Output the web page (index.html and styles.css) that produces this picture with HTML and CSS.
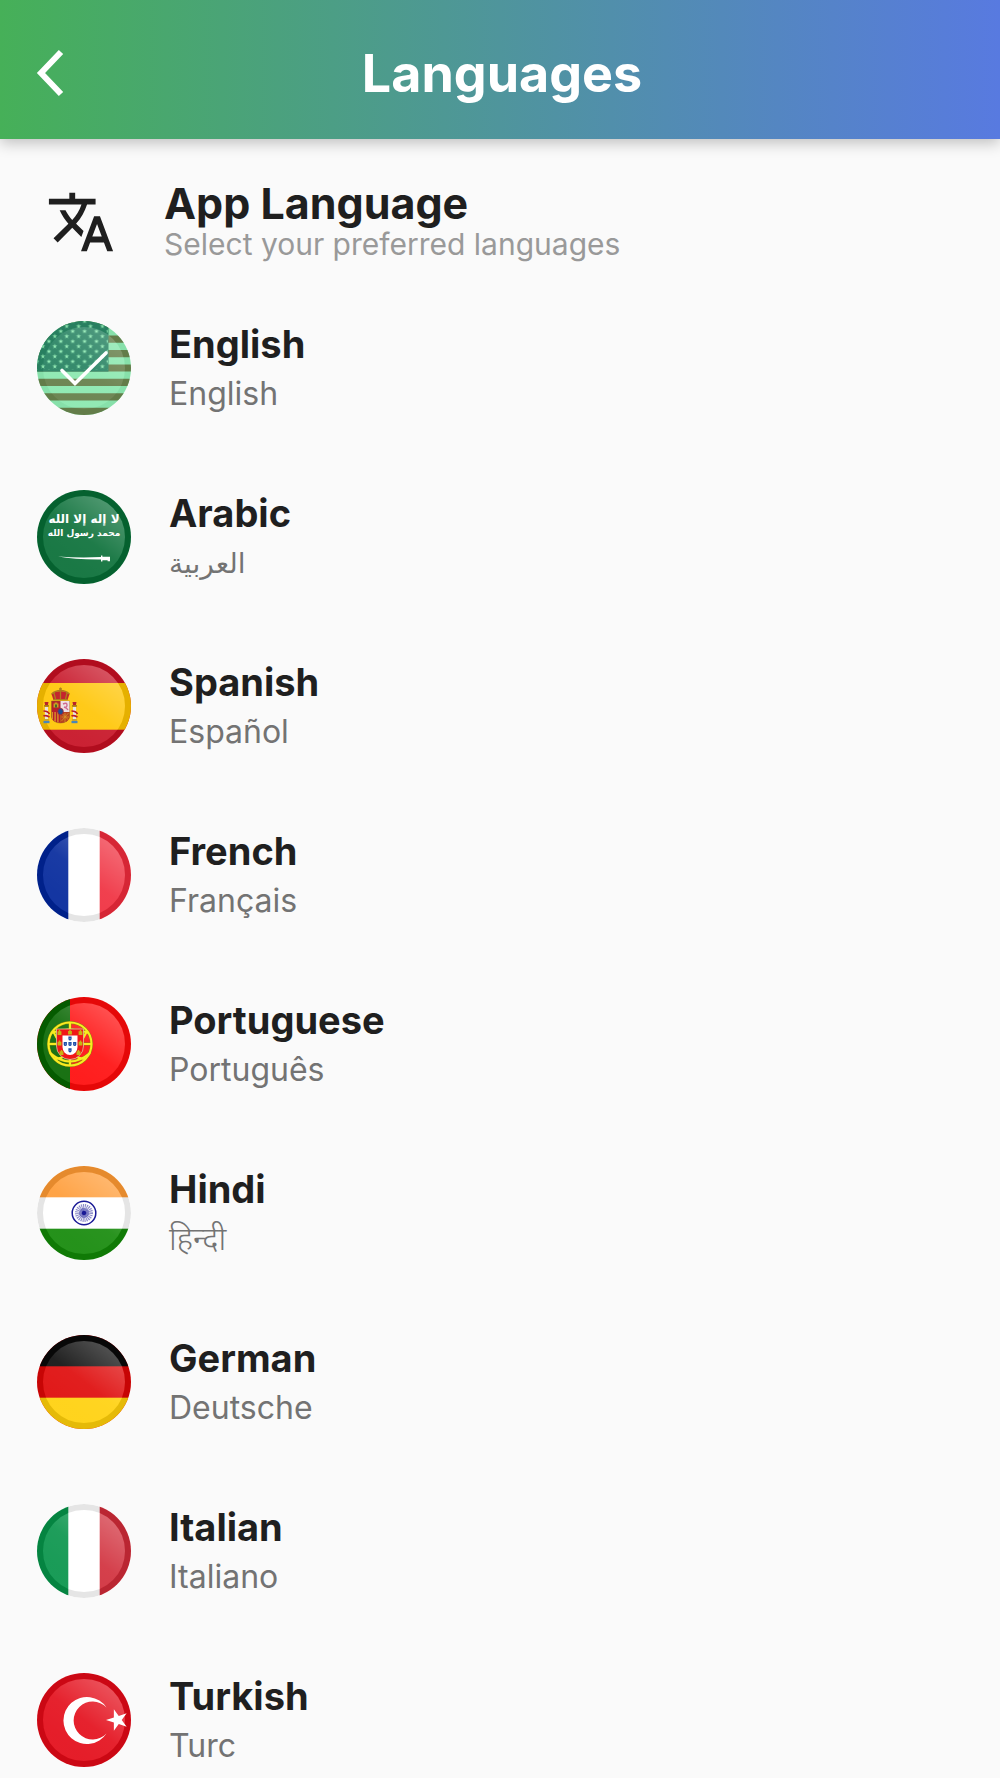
FILE: index.html
```html
<!DOCTYPE html>
<html lang="en">
<head>
<meta charset="utf-8">
<meta name="viewport" content="width=device-width, initial-scale=1">
<title>Languages</title>
<link rel="stylesheet" href="styles.css">
</head>
<body>
<svg class="defs" width="0" height="0" aria-hidden="true">
  <defs>
    <clipPath id="disc"><circle cx="47" cy="47" r="47"/></clipPath>
    <linearGradient id="shine" x1="0.85" y1="0.08" x2="0.3" y2="0.8">
      <stop offset="0" stop-color="#fff" stop-opacity=".3"/>
      <stop offset="0.6" stop-color="#fff" stop-opacity=".1"/>
      <stop offset="1" stop-color="#fff" stop-opacity=".08"/>
    </linearGradient>
    <g id="gloss">
      <circle cx="47" cy="47" r="44" fill="none" stroke="#000" stroke-width="6" stroke-opacity=".1"/>
      <circle cx="47" cy="47" r="41" fill="url(#shine)"/>
    </g>
    <polygon id="star" points="0,-10 2.2,-3.1 9.5,-3.1 3.6,1.2 5.9,8.1 0,3.8 -5.9,8.1 -3.6,1.2 -9.5,-3.1 -2.2,-3.1"/>
    <pattern id="stars" x="0" y="0.3" width="11.9" height="10.06" patternUnits="userSpaceOnUse">
      <use href="#star" transform="translate(5.9 5) scale(.26)"/>
      <use href="#star" transform="translate(0 10.06) scale(.26)"/>
      <use href="#star" transform="translate(11.9 10.06) scale(.26)"/>
      <use href="#star" transform="translate(0 0) scale(.26)"/>
      <use href="#star" transform="translate(11.9 0) scale(.26)"/>
    </pattern>
    <g id="castle"><path d="M-1.6 2V-1h1v-1h1.200v1h1v3z"/></g>
    <g id="pillar">
      <rect x="-1.500" y="-5" width="3" height="12" fill="#e8e4e0"/>
      <rect x="-2.600" y="7" width="5.200" height="2" fill="#c8a432"/>
      <rect x="-3" y="9" width="6" height="2.200" fill="#4a86b8"/>
      <rect x="-2.400" y="-7" width="4.800" height="1.800" fill="#a87818"/>
      <path d="M-2-10h4l-.6 3h-2.800z" fill="#b8202c"/>
      <path d="M-3-1c2 0 5 1 6 3M-3 4c2-1 4 0 6 1" stroke="#b8202c" stroke-width="1.600" fill="none"/>
    </g>
    <g id="quina">
      <path d="M-1.600-2h3.200v2.200a1.600 1.900 0 0 1-3.200 0z" fill="#1f4da8"/>
      <circle r=".45" fill="#fff"/>
    </g>
  </defs>
</svg>

<header class="topbar">
  <button class="back" type="button" aria-label="Back">
    <svg viewBox="0 0 32 52" width="32" height="52"><path d="M26 4 6 25l20 21" fill="none" stroke="#fff" stroke-width="6"/></svg>
  </button>
  <h1 class="title">Languages</h1>
</header>

<main class="page">
  <section class="intro">
    <svg class="intro-icon" viewBox="0 0 24 24" aria-hidden="true"><path fill="#1f1f1f" d="M12.870 15.070l-2.540-2.510.03-.03c1.740-1.940 2.980-4.170 3.710-6.530H17V4h-7V2H8v2H1v1.990h11.170C11.500 7.920 10.440 9.750 9 11.350 8.070 10.320 7.300 9.190 6.690 8h-2c.73 1.630 1.730 3.170 2.980 4.560l-5.090 5.020L4 19l5-5 3.110 3.110.76-2.040zM18.500 10h-2L12 22h2l1.120-3h4.750L21 22h2l-4.500-12zm-2.620 7l1.620-4.330L19.120 17h-3.240z"/></svg>
    <div>
      <h2 class="intro-title">App Language</h2>
      <p class="intro-sub">Select your preferred languages</p>
    </div>
  </section>

  <ul class="languages">
    <li><label class="language">
      <input class="pick" type="radio" name="language" value="en" checked>
      <svg class="flag" viewBox="0 0 94 94" aria-hidden="true">
        <g clip-path="url(#disc)">
          <rect width="94" height="94" fill="#8ce8b0"/>
          <path d="M0 3.620h94M0 18.080h94M0 32.540h94M0 47h94M0 61.460h94M0 75.920h94M0 90.380h94" stroke="#67804c" stroke-width="7.230"/>
          <rect width="71.500" height="50.600" fill="#2a8464"/>
          <rect width="71" height="49" fill="url(#stars)"/>
          <circle cx="47" cy="47" r="44" fill="none" stroke="#000" stroke-width="6" stroke-opacity=".03"/>
          <circle cx="47" cy="47" r="41" fill="url(#shine)" opacity=".6"/>
        </g>
        <path d="M25 49.500 38 62.500 69 32" fill="none" stroke="#fff" stroke-width="3.600" stroke-linecap="round"/>
      </svg>
      <span class="names"><span class="name">English</span><span class="native">English</span></span>
    </label></li>

    <li><label class="language">
      <input class="pick" type="radio" name="language" value="ar">
      <svg class="flag" viewBox="0 0 94 94" aria-hidden="true">
        <g clip-path="url(#disc)">
          <rect width="94" height="94" fill="#066d35"/>
          <use href="#gloss"/>
          <g class="shahada" fill="#fff" text-anchor="middle">
            <text x="47" y="33">لا إله إلا الله</text>
            <text class="shahada-end" x="47" y="46">محمد رسول الله</text>
          </g>
          <path d="M21 66.500q20 1.600 43 .6v-1.600h1.400v1.200h7.600v4.600h-2.400v-1h-5.200v1.200H64v-2q-26 .2-43-3z" fill="#fff"/>
        </g>
      </svg>
      <span class="names"><span class="name">Arabic</span><span class="native" lang="ar">العربية</span></span>
    </label></li>

    <li><label class="language">
      <input class="pick" type="radio" name="language" value="es">
      <svg class="flag" viewBox="0 0 94 94" aria-hidden="true">
        <g clip-path="url(#disc)">
          <rect width="94" height="94" fill="#c60f22"/>
          <rect y="24" width="94" height="46.700" fill="#ffc400"/>
          <use href="#gloss"/>
          <g transform="translate(23.500 52)">
            <use href="#pillar" transform="translate(-14 1)"/>
            <use href="#pillar" transform="translate(14 1)"/>
            <path d="M-9-10H9V6a9 6 0 0 1-18 0z" fill="#b51f2c" stroke="#8f6a1c" stroke-width=".5"/>
            <path d="M0-10h9V1H0z" fill="#eee0e4"/>
            <path d="M2.500-7q4-2 4 1t-3 2q3 1 4 3" fill="none" stroke="#cf6a92" stroke-width="1.400"/>
            <path d="M-8.500 1H0v10.500a9 6 0 0 1-8.500-4z" fill="#d9902a"/>
            <path d="M-6.800 1v8.500M-4 1v10M-1.200 1v10.500" stroke="#b51f2c" stroke-width="1.400"/>
            <path d="M0 1h8.800v6A9 6 0 0 1 0 11.600z" fill="#b8431f"/>
            <path d="M1 2l7 7M8 2l-7 8M4.500 2v9M1 6h7.500" stroke="#d9a02a" stroke-width=".7"/>
            <path d="M-7-3.500v-4h1.200v-1h2.600v1H-2v4z" fill="#c9a022"/>
            <path d="M-5.500-3.500v-3h2v3z" fill="#456a2a"/>
            <ellipse rx="2.800" ry="3.200" cy=".5" fill="#1c4f94" stroke="#b51f2c" stroke-width=".8"/>
            <path d="M-7-11-9-17q4-3 9-3t9 3l-2 6z" fill="#c4262e"/>
            <path d="M-9-17q4-3.500 9-3.500T9-17M-5-12l-1.500-6M5-12l1.500-6M0-12v-9M-1.500-22h3M0-23.500v3M-7-11.300H7" fill="none" stroke="#ad7f1c" stroke-width="1.300"/>
          </g>
        </g>
      </svg>
      <span class="names"><span class="name">Spanish</span><span class="native" lang="es">Español</span></span>
    </label></li>

    <li><label class="language">
      <input class="pick" type="radio" name="language" value="fr">
      <svg class="flag" viewBox="0 0 94 94" aria-hidden="true">
        <g clip-path="url(#disc)">
          <rect width="94" height="94" fill="#fff"/>
          <rect width="31.300" height="94" fill="#00259a"/>
          <rect x="62.700" width="31.300" height="94" fill="#ef2b3b"/>
          <use href="#gloss"/>
        </g>
      </svg>
      <span class="names"><span class="name">French</span><span class="native" lang="fr">Français</span></span>
    </label></li>

    <li><label class="language">
      <input class="pick" type="radio" name="language" value="pt">
      <svg class="flag" viewBox="0 0 94 94" aria-hidden="true">
        <g clip-path="url(#disc)">
          <rect width="94" height="94" fill="#ff0a0a"/>
          <rect width="33" height="94" fill="#066600"/>
          <use href="#gloss"/>
          <g transform="translate(33 47)">
            <g fill="none" stroke="#8a8a10" stroke-width="2.900">
              <circle r="21.500"/><path d="M0-22v44M-22 0h44M-19-11Q0-18 19-11M-20 9Q0 26 20 9"/>
            </g>
            <g fill="none" stroke="#f8ec20" stroke-width="2.100">
              <circle r="21.500"/>
              <path d="M0-22v44M-22 0h44M-19-11Q0-18 19-11M-20 9Q0 26 20 9M-17-13Q-4 14 16 15M17-13Q4 14-16 15"/>
            </g>
            <path d="M-13.500-15h27V2a13.500 13.500 0 0 1-27 0z" fill="#f01818" stroke="#d8c8a0" stroke-width=".8"/>
            <path d="M-7.500-8.500h15V3a7.500 8 0 0 1-15 0z" fill="#fff"/>
            <use href="#quina" y="-5.500"/><use href="#quina"/><use href="#quina" x="-4.700"/><use href="#quina" x="4.700"/><use href="#quina" y="6.300"/>
            <g fill="#c8b414"><use href="#castle" transform="translate(-10.500 -11.500) scale(1.200)"/><use href="#castle" transform="translate(0 -11.800) scale(1.200)"/><use href="#castle" transform="translate(10.500 -11.500) scale(1.200)"/><use href="#castle" transform="translate(-10.500 -1) scale(1.200)"/><use href="#castle" transform="translate(10.500 -1) scale(1.200)"/><use href="#castle" transform="translate(-8.500 8.500) scale(1.200)"/><use href="#castle" transform="translate(8.500 8.500) scale(1.200)"/></g>
          </g>
        </g>
      </svg>
      <span class="names"><span class="name">Portuguese</span><span class="native" lang="pt">Português</span></span>
    </label></li>

    <li><label class="language">
      <input class="pick" type="radio" name="language" value="hi">
      <svg class="flag" viewBox="0 0 94 94" aria-hidden="true">
        <g clip-path="url(#disc)">
          <rect width="94" height="94" fill="#fff"/>
          <rect width="94" height="31.300" fill="#ff9a33"/>
          <rect y="62.700" width="94" height="31.300" fill="#128807"/>
          <use href="#gloss"/>
          <g fill="none" stroke="#1a1a96">
            <circle cx="47" cy="47" r="11.800" stroke-width="1.500"/>
            <circle cx="47" cy="47" r="5.500" stroke-width="7" stroke-opacity=".5" stroke-dasharray=".85 .59"/>
            <circle cx="47" cy="47" r="3.500" stroke-width="3" stroke-opacity=".4"/>
          </g>
          <circle cx="47" cy="47" r="2.300" fill="#1a1a96"/>
        </g>
      </svg>
      <span class="names"><span class="name">Hindi</span><span class="native" lang="hi">हिन्दी</span></span>
    </label></li>

    <li><label class="language">
      <input class="pick" type="radio" name="language" value="de">
      <svg class="flag" viewBox="0 0 94 94" aria-hidden="true">
        <g clip-path="url(#disc)">
          <rect width="94" height="94" fill="#de0606"/>
          <rect width="94" height="31.300" fill="#0a0a0a"/>
          <rect y="62.700" width="94" height="31.300" fill="#ffd00a"/>
          <use href="#gloss"/>
        </g>
      </svg>
      <span class="names"><span class="name">German</span><span class="native" lang="de">Deutsche</span></span>
    </label></li>

    <li><label class="language">
      <input class="pick" type="radio" name="language" value="it">
      <svg class="flag" viewBox="0 0 94 94" aria-hidden="true">
        <g clip-path="url(#disc)">
          <rect width="94" height="94" fill="#fff"/>
          <rect width="31.300" height="94" fill="#069349"/>
          <rect x="62.700" width="31.300" height="94" fill="#d02b38"/>
          <use href="#gloss"/>
        </g>
      </svg>
      <span class="names"><span class="name">Italian</span><span class="native" lang="it">Italiano</span></span>
    </label></li>

    <li><label class="language">
      <input class="pick" type="radio" name="language" value="tr">
      <svg class="flag" viewBox="0 0 94 94" aria-hidden="true">
        <g clip-path="url(#disc)">
          <rect width="94" height="94" fill="#e30a17"/>
          <use href="#gloss"/>
          <path d="M69.500 34.500A23.500 23.500 0 1 0 69.500 60.500A19 19 0 1 1 69.500 34.500z" fill="#fff"/>
          <use href="#star" transform="translate(80.400 47) rotate(-90) scale(1.140)" fill="#fff"/>
        </g>
      </svg>
      <span class="names"><span class="name">Turkish</span><span class="native">Turc</span></span>
    </label></li>
  </ul>
</main>
</body>
</html>
```
FILE: styles.css
```css
* { box-sizing: border-box; }

body {
  margin: 0;
  background: #fafafa;
  color: #1f1f1f;
  font-family: Inter, "Noto Sans", "DejaVu Sans", sans-serif;
}

h1, h2, p, ul { margin: 0; padding: 0; }
ul { list-style: none; }
.defs { display: block; height: 0; }

.topbar {
  display: grid;
  grid-template-columns: 72px 1fr 68px;
  align-items: center;
  height: 139px;
  padding: 8px 0 0;
  background: linear-gradient(90deg, #46b058, #587ae0);
  box-shadow: 0 4px 14px rgba(0, 0, 0, .24);
}

.back {
  display: flex;
  justify-content: flex-end;
  padding: 0 5px 0 0;
  border: 0;
  background: none;
  cursor: pointer;
}

.title {
  color: #fff;
  font-size: 52px;
  font-weight: 700;
  line-height: 64px;
  text-align: center;
}

.page { padding: 42px 37px 0; }

.intro {
  display: flex;
  align-items: center;
  gap: 48px;
  padding-left: 9px;
}
.intro-icon { flex: none; width: 70px; height: 70px; }
.intro-title { font-size: 43px; font-weight: 700; line-height: 44px; }
.intro-sub { color: #999; font-size: 30px; font-weight: 400; line-height: 38px; }

.languages { padding-top: 20px; }

.language {
  display: flex;
  align-items: center;
  gap: 38px;
  height: 169px;
  cursor: pointer;
}
.pick {
  position: absolute;
  opacity: 0;
  width: 1px;
  height: 1px;
  margin: 0;
}
.flag { flex: none; width: 94px; height: 94px; }
#stars { fill: #8ce8b0; }
.shahada { font: bold 12px "DejaVu Sans", sans-serif; }
.shahada-end { font-size: 9px; }

.names { display: flex; flex-direction: column; padding-top: 4px; }
.name { font-size: 38px; font-weight: 700; line-height: 48px; }
.native { color: #737373; font-size: 32px; font-weight: 400; line-height: 52px; }
.native:lang(ar) { font-size: 28px; }
.native:lang(hi) { font-weight: 300; }
```
